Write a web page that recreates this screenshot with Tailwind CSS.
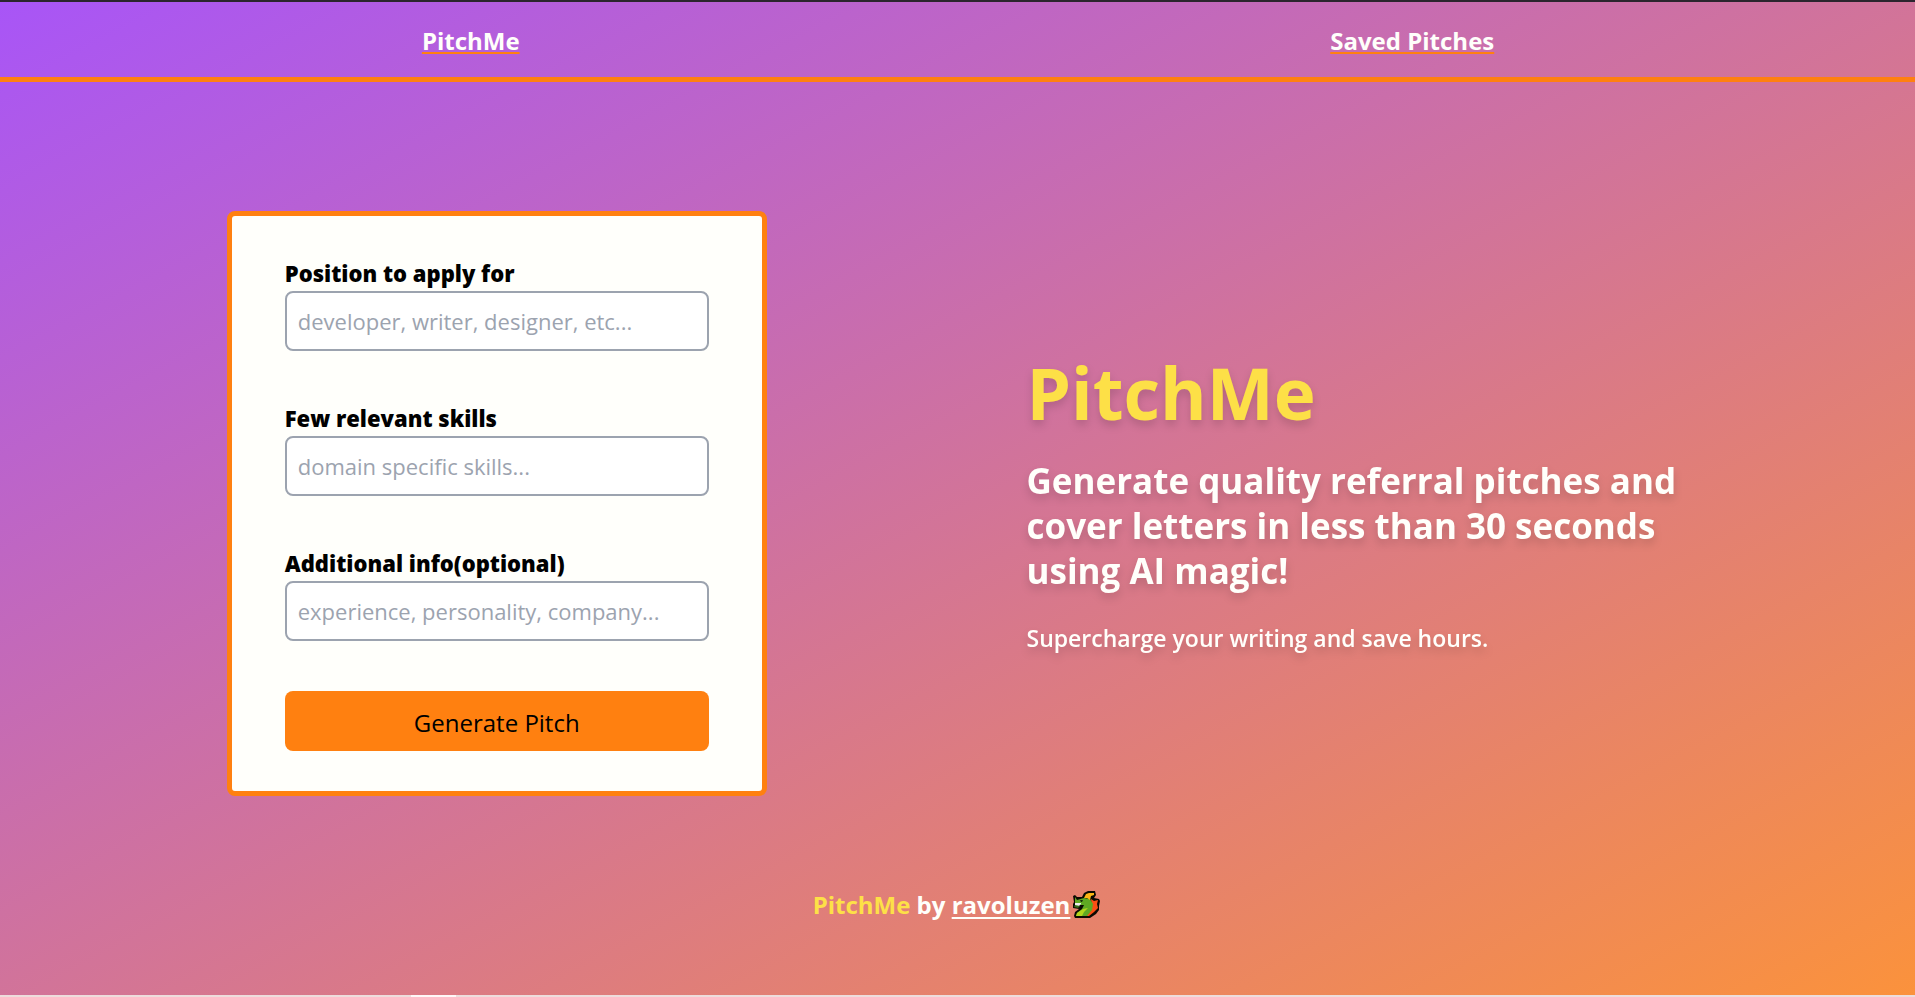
<!DOCTYPE html>
<html lang="en">
<head>
<meta charset="utf-8">
<meta name="viewport" content="width=device-width, initial-scale=1">
<title>PitchMe</title>
<script src="https://cdn.jsdelivr.net/npm/@tailwindcss/browser@4"></script>
</head>
<body class="flex min-h-screen flex-col border-t-2 border-t-[#2b252e] bg-[linear-gradient(to_bottom_right,#a855f7,#fb923c)] bg-no-repeat font-['Open_Sans','Noto_Sans',sans-serif] text-[#fffffb]">
  <header class="border-b-5 border-[#ff8010]">
    <nav class="grid grid-cols-2 justify-items-center pt-[21px] pb-[19px] pr-8 text-2xl leading-[35px] font-bold">
      <a href="#" class="underline decoration-[#ff8010] decoration-2 underline-offset-2">PitchMe</a>
      <a href="#saved" class="underline decoration-[#ff8010] decoration-2 underline-offset-2">Saved Pitches</a>
    </nav>
  </header>

  <main class="grid grow grid-cols-2 items-center pt-[38px]">
    <form class="ml-9 flex w-[540px] flex-col justify-self-center rounded-lg border-5 border-[#ff8010] bg-[#fffffb] px-[53px] pt-10 pb-10 text-black">
      <label for="position" class="text-[22px] leading-[35px] font-extrabold">Position to apply for</label>
      <input id="position" type="text" placeholder="developer, writer, designer, etc..." class="mb-[50px] h-15 rounded-lg border-2 border-[#9ca3af] bg-white px-[11px] text-[22px] font-medium placeholder:text-[#9ca3af]">
      <label for="skills" class="text-[22px] leading-[35px] font-extrabold">Few relevant skills</label>
      <input id="skills" type="text" placeholder="domain specific skills..." class="mb-[50px] h-15 rounded-lg border-2 border-[#9ca3af] bg-white px-[11px] text-[22px] font-medium placeholder:text-[#9ca3af]">
      <label for="info" class="text-[22px] leading-[35px] font-extrabold">Additional info(optional)</label>
      <input id="info" type="text" placeholder="experience, personality, company..." class="mb-[50px] h-15 rounded-lg border-2 border-[#9ca3af] bg-white px-[11px] text-[22px] font-medium placeholder:text-[#9ca3af]">
      <button type="submit" class="h-15 rounded-lg bg-[#ff8010] pt-1 text-2xl font-medium">Generate Pitch</button>
    </form>

    <section class="ml-[69px] max-w-[680px] pt-1 drop-shadow-[0_5px_4px_rgba(0,0,0,0.15)]">
      <h1 class="text-[71px] leading-[75px] font-bold text-[#fde047]">PitchMe</h1>
      <h2 class="mt-7 text-[35px] leading-[45px] font-bold">Generate quality referral pitches and cover letters in less than 30 seconds using AI magic!</h2>
      <p class="mt-7 text-[23px] leading-[35px] font-semibold">Supercharge your writing and save hours.</p>
    </section>
  </main>

  <footer class="flex items-center justify-center pr-0.5 pb-[73px] text-2xl leading-[35px] font-bold">
    <p><span class="text-[#fde047]">PitchMe</span> by <a href="#author" class="underline decoration-2 underline-offset-3">ravoluzen</a></p>
    <svg class="ml-0.5 size-7" viewBox="0 0 28 28" role="img" aria-label="dragon">
      <path d="M1 5 3 4 5 6 10 6 12 2 16 0 23 0 24 4 22 7 27 8 28 10 27 15 27 19 24 23 18 27 3 27 2 25 3 21 7 18 1 17 1 13 2 11Z" fill="#0c0a02"/>
      <path d="M19 8 22 10 26 9 25 13 26 17 22 21 17 25 12 25 20 17Z" fill="#fb4f14"/>
      <path d="M3 6 5 9 12 7 18 8 21 13 20 19 15 25 4 25 5 22 10 18 12 14 3 14 3 11Z" fill="#5fa823"/>
      <path d="M4 25 5 22 11 18 16 17 12 21 10 25Z" fill="#b2d51c"/>
      <path d="M12 7 14 3 17 2 22 2 22 4 19 5 18 9 15 7Z" fill="#fdb515"/>
      <path d="M3 12h6v1l-2 2H3Z" fill="#eee"/>
      <path d="M3 14 8 15 6 17 2 16Z" fill="#356d1b"/>
      <path d="M8 9h3l-1 2H9Z" fill="#17300b"/>
    </svg>
  </footer>
  <div class="h-0.5 bg-[#eedddc] pl-[411px]"><div class="h-0.5 w-[45px] bg-[#fff8f8]"></div></div>
</body>
</html>
